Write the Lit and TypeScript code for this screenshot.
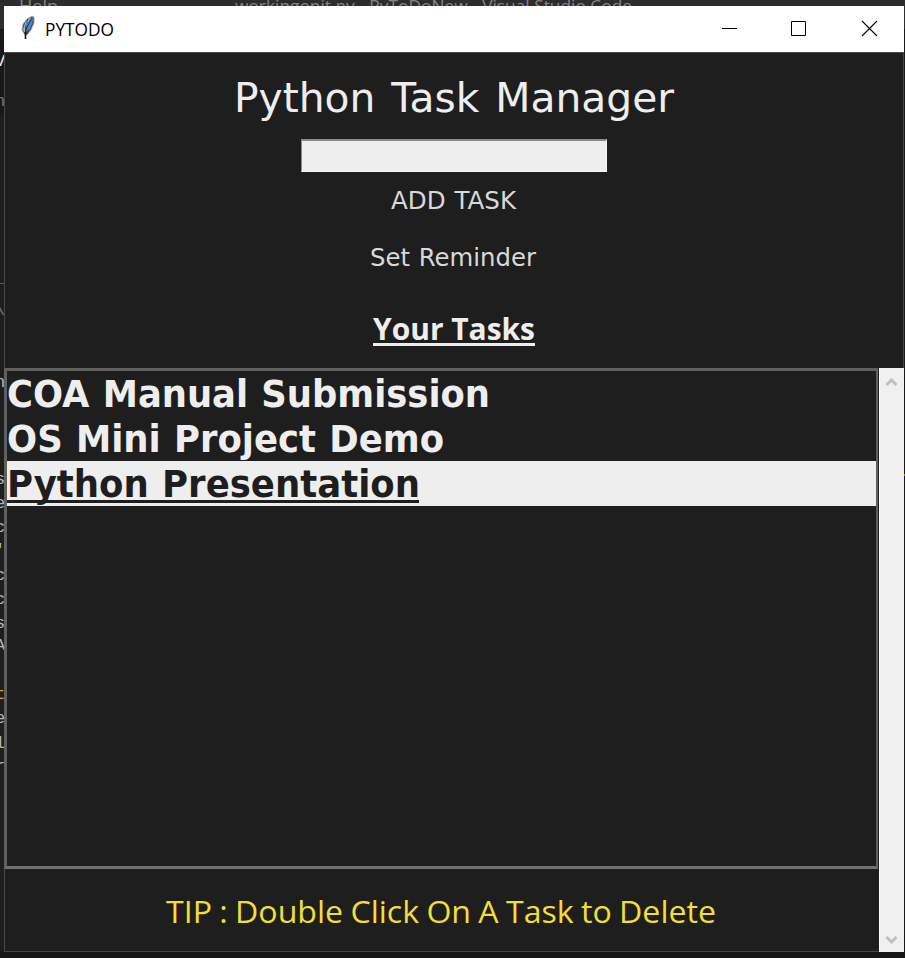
import { LitElement, html, css, svg } from "lit";
import { customElement, property } from "lit/decorators.js";

/** A single line of text set to a fixed measure. */
@customElement("fit-text")
class FitText extends LitElement {
  @property() text = "";
  @property({ type: Number }) width = 100;
  @property({ type: Number }) height = 20;
  @property({ type: Number }) baseline = 16;

  static styles = css`
    :host { display: block; flex: none; }
    .line { display: block; overflow: visible; }
    .glyphs { fill: currentColor; }
  `;

  render() {
    return html`<svg class="line" width=${this.width} height=${this.height}>
      ${svg`<text class="glyphs" x="0" y=${this.baseline} textLength=${this.width} lengthAdjust="spacingAndGlyphs">${this.text}</text>`}
    </svg>`;
  }
}

@customElement("title-bar")
class TitleBar extends LitElement {
  static styles = css`
    :host { display: flex; height: 46px; background: #fff; color: #000; box-sizing: border-box; padding-left: 16px; }
    .feather { width: 16px; height: 26px; margin-top: 9px; }
    .name { margin-left: 9px; font: 18px "Open Sans", sans-serif; }
    .controls { display: flex; margin-left: auto; }
    .control { width: 70px; height: 46px; }
    .close { width: 65px; }
  `;
  render() {
    return html`
      <svg class="feather" viewBox="0 0 16 26">
        <path d="M5 20 L2 15 L3 9 L7 4 L12 1 L14 2 L14 8 L11 15 L7 20Z" fill="#42464c" stroke="#aaa" stroke-width=".9"/>
        <path d="M6 16 L6 8 L10 3 L13 2 L12.5 8 L9.5 15Z" fill="#4c80c4"/>
        <path d="M3 15 L5 8 L7 5 L5 12 L5 18Z" fill="#aeb6bd"/>
        <path d="M12 3 L7 12 L5 18" fill="none" stroke="#17253d" stroke-width=".8"/>
        <path d="M8 7 L9 4 L11 3" fill="none" stroke="#8ab8ec" stroke-width="1"/>
        <path d="M5.5 17V24" stroke="#111" stroke-width="1.6"/>
      </svg>
      <fit-text class="name" text="PYTODO" width="69" height="46" baseline="30"></fit-text>
      <div class="controls">
        <svg class="control" viewBox="0 0 70 46"><path d="M23 22.5H38" stroke="#000"/></svg>
        <svg class="control" viewBox="0 0 70 46"><path d="M22.5 15.5h14v14h-14z" fill="none" stroke="#000"/></svg>
        <svg class="control close" viewBox="0 0 65 46"><path d="M23 15L38 30M38 15L23 30" stroke="#000" stroke-width="1.1"/></svg>
      </div>`;
  }
}

const sliver = [
  { c: "V", y: 66, tone: "bright" },
  { c: "n", y: 106, tone: "dim" },
  { c: "\\", y: 315, tone: "dim" },
  { c: "n", y: 387, tone: "plain" },
  { c: "s", y: 484, tone: "plain" },
  { c: "e", y: 508, tone: "plain" },
  { c: "c", y: 532, tone: "plain" },
  { c: "'", y: 555, tone: "plain" },
  { c: "c", y: 580, tone: "plain" },
  { c: "c", y: 604, tone: "plain" },
  { c: "s", y: 628, tone: "plain" },
  { c: "A", y: 650, tone: "plain" },
  { c: "t", y: 699, tone: "gold" },
  { c: "e", y: 723, tone: "plain" },
  { c: "l", y: 748, tone: "plain" },
  { c: "r", y: 771, tone: "plain" },
];

@customElement("app-root")
class AppRoot extends LitElement {
  static styles = css`
    :host { display: block; position: relative; width: 905px; height: 958px; box-sizing: border-box; padding: 6px 1px 6px 4px; background: #191817; overflow: hidden; }
    .editor { position: absolute; inset: 0; width: 905px; height: 958px; }
    .menu { font: 17px "Open Sans", sans-serif; fill: #858585; }
    .code { font: 17px "Liberation Mono", monospace; }
    .plain { fill: #b8b8b8; }
    .bright { fill: #eee; }
    .dim { fill: #777; }
    .gold { fill: #d7a431; }
    .window { position: relative; width: 900px; height: 946px; display: flex; flex-direction: column; background: #1e1e1e; }
    .body { flex: 1; box-sizing: border-box; display: flex; flex-direction: column; border: 1px solid #474747; }
    .form { height: 315px; display: flex; flex-direction: column; align-items: center; }
    .heading { height: 86px; color: #eee; font: 41px "DejaVu Sans", sans-serif; word-spacing: 3px; }
    .entry { width: 306px; height: 33px; box-sizing: border-box; padding: 0; outline: 0; border: 1px solid #f5f5f5; border-top: 2px solid #8a8a8a; border-left: 1px solid #8a8a8a; border-radius: 0; background: #eee; }
    .action { margin-right: 2px; padding: 0; border: 0; background: none; color: #d9d9d9; font: 24.5px "DejaVu Sans", sans-serif; word-spacing: 1px; }
    .subhead { margin-top: 25px; height: 32px; color: #eee; border-bottom: 3px solid #eee; font: bold 31px "Open Sans", sans-serif; }
    .lower { flex: 1; display: flex; min-height: 0; margin-right: -1px; margin-bottom: -1px; }
    .main { flex: none; width: 875px; margin-left: -1px; display: flex; flex-direction: column; }
    .list { box-sizing: border-box; width: 874px; height: 501px; border: 3px solid #606060; border-right-width: 2px; border-bottom-color: #707070; }
    .task { height: 45px; color: #eee; font: bold 37px "DejaVu Sans", sans-serif; box-sizing: border-box; word-spacing: 1px; }
    .selected { background: #eee; color: #1e1e1e; }
    .rule { height: 39px; width: 412px; border-bottom: 3px solid #1e1e1e; }
    .tip { margin: 0 0 0 162px; color: #f1df35; font: 31px "Open Sans", sans-serif; word-spacing: -1px; }
    .scroll { width: 25px; margin-left: auto; display: flex; flex-direction: column; justify-content: space-between; background: #f0f0f0; border-left: 1px solid #fff; box-sizing: border-box; }
    .arrow { width: 24px; height: 26px; }
  `;
  render() {
    return html`
      <svg class="editor">
        <rect width="905" height="29" fill="#2d2d2d"/>
        <rect y="115" width="4" height="843" fill="#1e1e1e"/>
        <text class="menu" x="19" y="12" textLength="39" lengthAdjust="spacingAndGlyphs">Help</text>
        <text class="menu" x="235" y="12" textLength="397" lengthAdjust="spacingAndGlyphs">workingonit.py - PyToDoNew - Visual Studio Code</text>
        <rect y="283" width="4" height="1" fill="#555"/>
        ${sliver.map((s) => svg`<text class="code ${s.tone}" x="-5" y=${s.y}>${s.c}</text>`)}
        <rect y="952" width="905" height="6" fill="#171717"/>
        <rect x="904" y="474" width="1" height="2" fill="#81833a"/>
      </svg>
      <div class="window">
        <title-bar></title-bar>
        <div class="body">
          <div class="form">
            <fit-text class="heading" text="Python Task Manager" width="440" height="86" baseline="59"></fit-text>
            <input class="entry" aria-label="Task" />
            <button class="action"><fit-text text="ADD TASK" width="125" height="57" baseline="37"></fit-text></button>
            <button class="action"><fit-text text="Set Reminder" width="166" height="57" baseline="37"></fit-text></button>
            <fit-text class="subhead" text="Your Tasks" width="162" height="30" baseline="29"></fit-text>
          </div>
          <div class="lower">
            <div class="main">
              <div class="list">
                <div class="task"><fit-text text="COA Manual Submission" width="483" height="45" baseline="36"></fit-text></div>
                <div class="task"><fit-text text="OS Mini Project Demo" width="437" height="45" baseline="36"></fit-text></div>
                <div class="task selected"><div class="rule"><fit-text text="Python Presentation" width="413" height="39" baseline="36"></fit-text></div></div>
              </div>
              <fit-text class="tip" text="TIP : Double Click On A Task to Delete" width="550" height="80" baseline="54"></fit-text>
            </div>
            <div class="scroll">
              <svg class="arrow" viewBox="0 0 24 26"><path d="M6.5 17L11.5 12L16.5 17" fill="none" stroke="#bfbfbf" stroke-width="3"/></svg>
              <svg class="arrow" viewBox="0 0 24 26"><path d="M6.5 11L11.5 16L16.5 11" fill="none" stroke="#bfbfbf" stroke-width="3"/></svg>
            </div>
          </div>
        </div>
      </div>`;
  }
}
